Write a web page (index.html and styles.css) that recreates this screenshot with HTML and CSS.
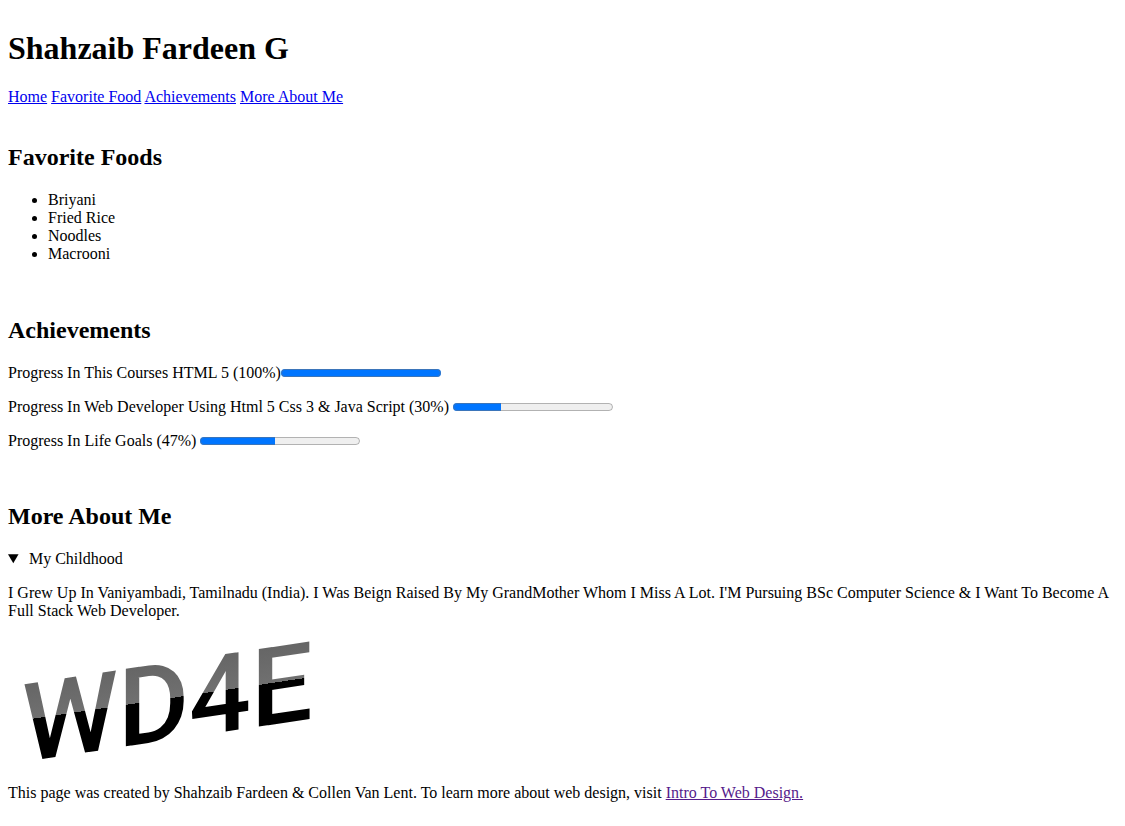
FILE: index.html
```html
<!DOCTYPE html>
<html lang="en">
<head>
<meta charset="utf-8">
<title>Shahzaib Fardeen G</title>
<link rel="stylesheet" href="styles.css">
</head>
<body>
<header>
<h1>Shahzaib Fardeen G</h1>
<nav>
<a href="#home">Home</a>
<a href="#food">Favorite Food</a>
<a href="#achievements">Achievements</a>
<a href="#more">More About Me</a>
</nav>
</header>
<main>
<section class="section" id="food">
<h2>Favorite Foods</h2>
<ul>
<li>Briyani</li>
<li>Fried Rice</li>
<li>Noodles</li>
<li>Macrooni</li>
</ul>
</section>
<section class="section" id="achievements">
<h2>Achievements</h2>
<p><label for="html">Progress In This Courses HTML 5 (100%)</label><progress id="html" value="100" max="100"></progress></p>
<p><label for="web">Progress In Web Developer Using Html 5 Css 3 &amp; Java Script (30%)</label> <progress id="web" value="30" max="100"></progress></p>
<p><label for="life">Progress In Life Goals (47%)</label> <progress id="life" value="47" max="100"></progress></p>
</section>
<section class="section section-about" id="more">
<h2>More About Me</h2>
<details open>
<summary>&nbsp;My Childhood</summary>
<p>I Grew Up In Vaniyambadi, Tamilnadu (India). I Was Beign Raised By My GrandMother Whom I Miss A Lot. I'M Pursuing BSc Computer Science &amp; I Want To Become A Full Stack Web Developer.</p>
</details>
</section>
</main>
<footer>
<svg class="logo" width="320" height="132" viewBox="0 0 320 132" role="img" aria-label="WD4E">
<defs>
<linearGradient id="shade" gradientUnits="userSpaceOnUse" x1="0" y1="51" x2="0" y2="128">
<stop offset="0" stop-color="#666"/>
<stop offset="0.46" stop-color="#707070"/>
<stop offset="0.46" stop-color="#000"/>
<stop offset="1" stop-color="#000"/>
</linearGradient>
</defs>
<text class="logo-text" x="14" y="128" transform="skewY(-8.5)" fill="url(#shade)">WD4E</text>
</svg>
<p>This page was created by Shahzaib Fardeen &amp; Collen Van Lent. To learn more about web design, visit <a class="visited" href="#course">Intro To Web Design.</a></p>
</footer>
</body>
</html>
```
FILE: styles.css
```css
body {
  margin: 0;
  padding: 8px;
  background: #fff;
  color: #000;
  font-family: "Liberation Serif", "Times New Roman", serif;
  font-size: 16px;
  line-height: 18px;
}

h1 {
  margin: 22px 0 21px;
  font-size: 32px;
  line-height: 37px;
}

h2 {
  margin: 20px 0;
  font-size: 24px;
  line-height: 27px;
}

a {
  color: #0000ee;
}

.visited {
  color: #551a8b;
}

.section {
  padding-top: 18px;
}

.section-about {
  padding-top: 17px;
}

.logo {
  display: block;
  overflow: visible;
}

.logo-text {
  font-family: Roboto, "Liberation Sans", sans-serif;
  font-size: 109px;
  font-weight: 500;
}
```
